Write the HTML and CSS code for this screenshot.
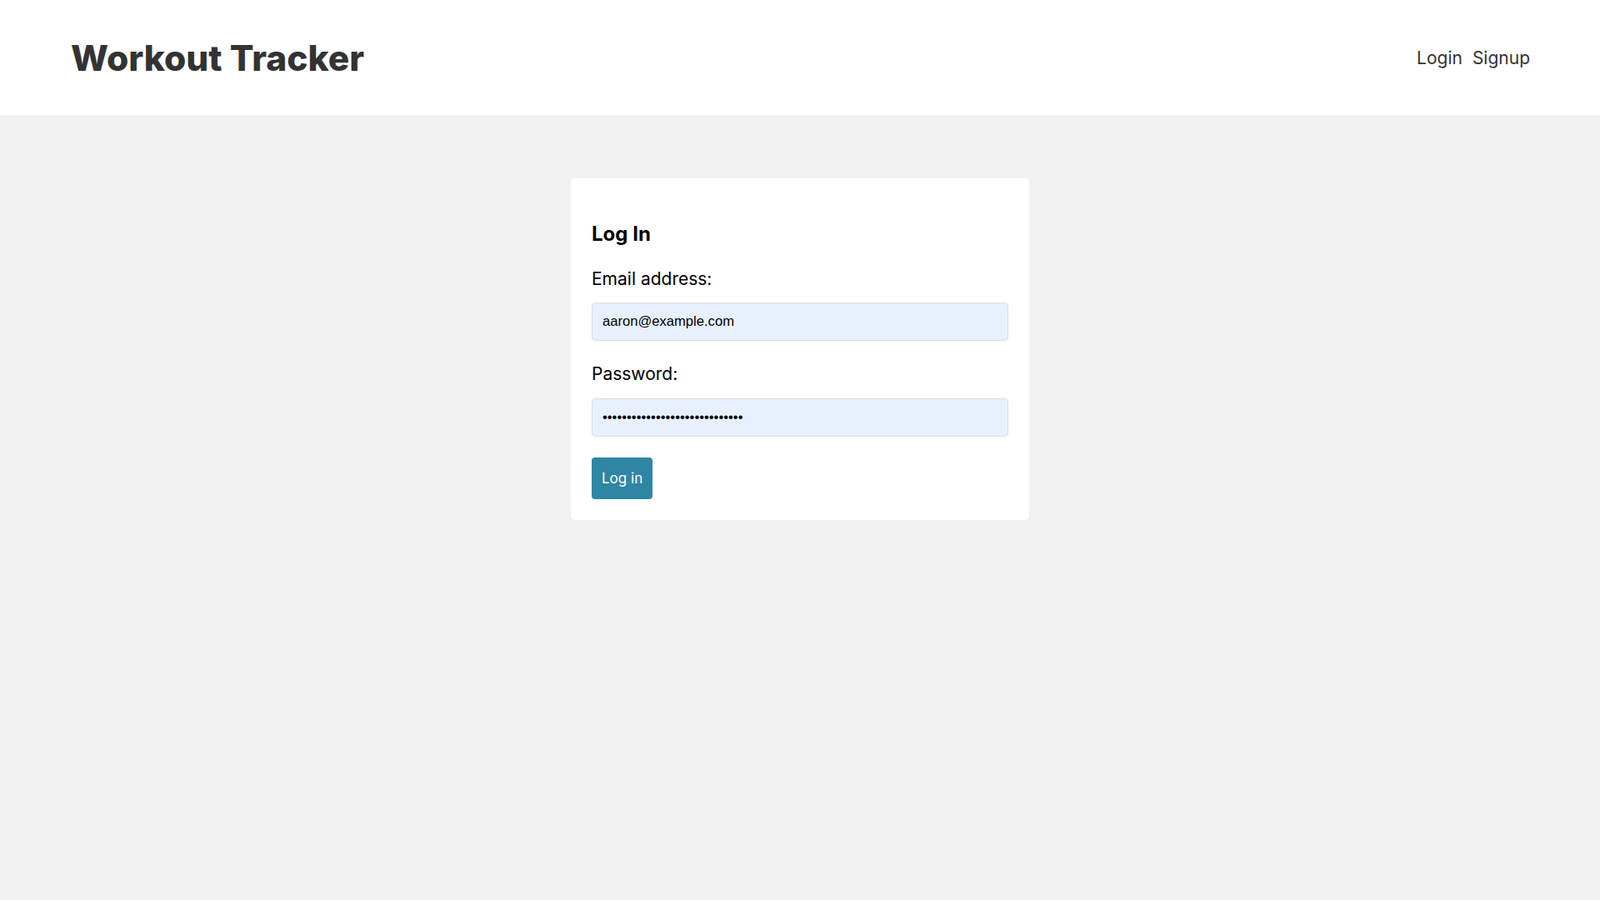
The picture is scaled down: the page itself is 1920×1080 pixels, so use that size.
FILE: index.html
```html
<!DOCTYPE html>
<html lang="en">
<head>
    <meta charset="UTF-8">
    <meta name="viewport" content="width=device-width, initial-scale=1.0">
    <title>Workout Tracker</title>
    <link rel="stylesheet" href="styles.css">
</head>
<body>
    <header class="top_bar">
        <h1 class="logo">Workout Tracker</h1>
        <nav class="nav">
            <a href="#">Login</a>
            <a href="#">Signup</a>
        </nav>
    </header>
    <main>
        <form class="login_card" action="#">
            <h2>Log In</h2>
            <label for="email">Email address:</label>
            <input type="email" id="email" class="field" value="aaron@example.com">
            <label for="password">Password:</label>
            <input type="password" id="password" class="field" value="workouttrackerpassword1234567">
            <button type="submit" class="btn">Log in</button>
        </form>
    </main>
</body>
</html>
```
FILE: styles.css
```css
body{
    margin: 0;
    background-color: #f1f1f1;
    font-family: "Inter", "Open Sans", sans-serif;
    color: #000;
}
.top_bar{
    height: 138px;
    box-sizing: border-box;
    padding: 0 84px 0 85px;
    background-color: #fff;
    display: flex;
    justify-content: space-between;
    align-items: center;
}
.logo{
    margin: 0;
    font-size: 42.5px;
    font-weight: 800;
    color: #333;
    line-height: 1.2;
}
.nav{
    display: flex;
    gap: 12px;
}
.nav a{
    color: #333;
    text-decoration: none;
    font-size: 21px;
}
.login_card{
    width: 550px;
    box-sizing: border-box;
    margin: 76px auto 0;
    padding: 25px;
    background-color: #fff;
    border-radius: 5px;
}
.login_card h2{
    margin: 28px 0 0;
    font-size: 24px;
    font-weight: 700;
    line-height: 1.15;
}
.login_card label{
    display: block;
    margin: 24px 0 13px;
    font-size: 21px;
    line-height: 1.5;
}
.login_card .field{
    display: block;
    width: 100%;
    height: 46px;
    box-sizing: border-box;
    padding: 0 12px;
    border: 1px solid #d9dce1;
    border-radius: 4px;
    background-color: #e8f0fe;
    font-family: "Liberation Sans", Arial, sans-serif;
    font-size: 16.6px;
    color: #000;
}
.btn{
    display: block;
    margin-top: 25px;
    height: 50px;
    padding: 0 12px;
    border: none;
    border-radius: 4px;
    background-color: #2e86a4;
    color: #fff;
    font-family: "Inter", "Open Sans", sans-serif;
    font-size: 17px;
}
```
